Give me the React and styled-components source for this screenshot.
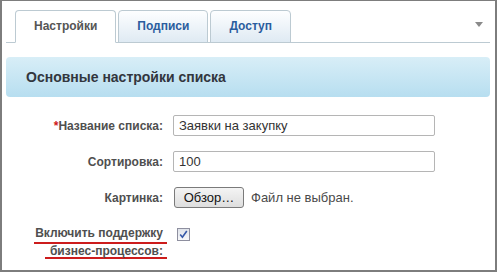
import React from "react";
import styled, { createGlobalStyle } from "styled-components";

const Global = createGlobalStyle`
  html, body { margin: 0; padding: 0; background: #fff; }
  body { font-family: "Liberation Sans", Arial, sans-serif; }
  * { box-sizing: border-box; }
`;

const Frame = styled.div`
  width: 497px;
  height: 272px;
  border: 2px solid #7d7d7d;
  border-top-width: 1px;
  background: #fff;
  overflow: hidden;
`;

const TabBar = styled.div`
  display: flex;
  align-items: flex-end;
  gap: 2px;
  height: 33px;
  margin: 9px 5px 0 4px;
  padding-left: 9px;
  border-bottom: 1px solid #bccad2;
`;

const Tab = styled.div`
  height: 33px;
  margin-bottom: -1px;
  padding: 0 18px 1px;
  display: flex;
  align-items: center;
  font-size: 12px;
  font-weight: bold;
  border: 1px solid #bccad2;
  border-radius: 4px 4px 0 0;
  color: ${(p) => (p.$active ? "#555" : "#2b5d9e")};
  background: ${(p) =>
    p.$active ? "#fff" : "linear-gradient(#fdfeff, #dfeaf3)"};
  border-bottom-color: ${(p) => (p.$active ? "#fff" : "#bccad2")};
`;

const MenuArrow = styled.div`
  margin-left: auto;
  align-self: flex-start;
  margin-top: 12px;
  margin-right: 7px;
  width: 0;
  height: 0;
  border-left: 4px solid transparent;
  border-right: 4px solid transparent;
  border-top: 5px solid #8a8a8a;
`;

const SectionHeader = styled.div`
  margin: 14px 5px 0 4px;
  height: 40px;
  border-radius: 4px;
  background: linear-gradient(#d8eef7, #b7def0);
  display: flex;
  align-items: center;
  padding-left: 20px;
  font-size: 14px;
  font-weight: bold;
  color: #32363e;
`;

const Form = styled.div`
  display: grid;
  grid-template-columns: 161px 1fr;
  column-gap: 10px;
  row-gap: 15px;
  margin-top: 18px;
`;

const Label = styled.div`
  text-align: right;
  align-self: ${(p) => (p.$top ? "start" : "center")};
  font-size: 12px;
  font-weight: bold;
  color: #4f4f4f;
  margin-right: ${(p) => (p.$top ? "-4px" : "0")};
  margin-top: ${(p) => (p.$top ? "3px" : "0")};
`;

const Req = styled.span`
  color: #d01818;
`;

const Field = styled.div`
  display: flex;
  align-items: ${(p) => (p.$top ? "flex-start" : "center")};
`;

const Input = styled.input`
  width: 262px;
  height: 21px;
  border: 1px solid #b5b5b5;
  border-radius: 2px;
  padding: 0 5px;
  font-family: "Liberation Sans", Arial, sans-serif;
  font-size: 13px;
  color: #333;
  outline: none;
`;

const BrowseButton = styled.button`
  width: 70px;
  height: 21px;
  margin-left: 1px;
  border: 1px solid #7a7a7a;
  border-radius: 3px;
  background: linear-gradient(#f4f4f4, #dedede);
  font-family: "Liberation Sans", Arial, sans-serif;
  font-size: 13px;
  color: #111;
  padding: 0;
`;

const FileText = styled.span`
  margin-left: 7px;
  font-size: 13px;
  color: #4a4a4a;
`;

const LineMark = styled.span`
  display: block;
  line-height: 15px;
  padding: 0 4px 0 2px;
  margin-left: auto;
  width: max-content;
  background-image: linear-gradient(#cc1c1c, #cc1c1c);
  background-repeat: no-repeat;
  background-size: 100% 2px;
  background-position: 0 100%;
  padding-bottom: ${(p) => (p.$first ? "3px" : "0")};
  padding-left: ${(p) => (p.$first ? "1px" : "5px")};
`;

const CheckBox = styled.span`
  display: inline-flex;
  align-items: center;
  justify-content: center;
  width: 13px;
  height: 13px;
  margin: 5px 0 0 4px;
  border: 1px solid #8e8f9f;
  background: linear-gradient(#dfe3ea, #f7f8fa);
`;

export default function App() {
  return (
    <>
      <Global />
      <Frame>
        <TabBar>
          <Tab $active>Настройки</Tab>
          <Tab>Подписи</Tab>
          <Tab>Доступ</Tab>
          <MenuArrow />
        </TabBar>
        <SectionHeader>Основные настройки списка</SectionHeader>
        <Form>
          <Label>
            <Req>*</Req>Название списка:
          </Label>
          <Field>
            <Input defaultValue="Заявки на закупку" />
          </Field>
          <Label>Сортировка:</Label>
          <Field>
            <Input defaultValue="100" />
          </Field>
          <Label>Картинка:</Label>
          <Field>
            <BrowseButton>Обзор…</BrowseButton>
            <FileText>Файл не выбран.</FileText>
          </Field>
          <Label $top>
            <LineMark $first>Включить поддержку</LineMark>
            <LineMark>бизнес-процессов:</LineMark>
          </Label>
          <Field $top>
            <CheckBox>
              <svg width="9" height="9" viewBox="0 0 9 9">
                <path
                  d="M1.2 4.6 L3.4 7.2 L7.8 1"
                  fill="none"
                  stroke="#3558a8"
                  strokeWidth="1.6"
                />
              </svg>
            </CheckBox>
          </Field>
        </Form>
      </Frame>
    </>
  );
}
